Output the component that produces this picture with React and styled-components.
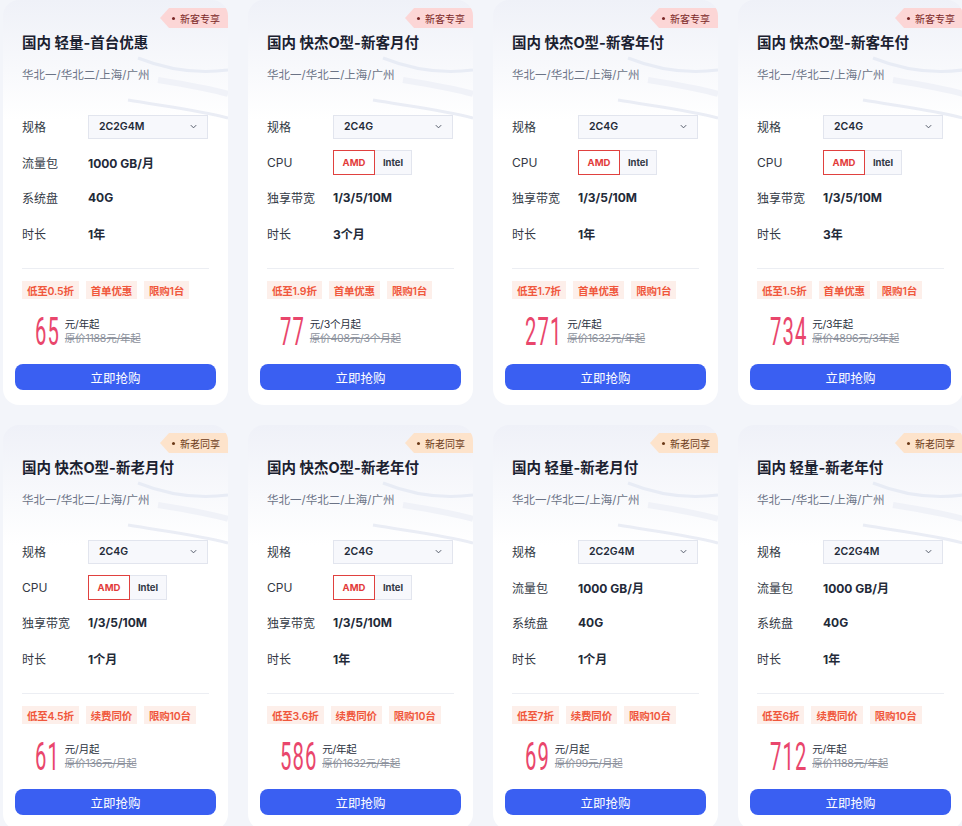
import React from "react";
import styled, { createGlobalStyle } from "styled-components";

const GlobalStyle = createGlobalStyle`
  html, body {
    margin: 0;
    padding: 0;
    background: #f3f5fa;
    overflow: hidden;
  }
  body {
    font-family: "Inter", "Noto Sans CJK SC", sans-serif;
  }
`;

const Page = styled.div`
  display: grid;
  grid-template-columns: repeat(4, 225px);
  column-gap: 20px;
  row-gap: 20px;
  padding-left: 3px;
  width: 963px;
`;

const Card = styled.div`
  position: relative;
  overflow: hidden;
  height: 405px;
  box-sizing: border-box;
  border-radius: 16px;
  background: linear-gradient(180deg, #eff1f8 0%, #f8f9fc 70px, #ffffff 120px);
  padding: 32px 19px 15px;
  display: flex;
  flex-direction: column;
`;

const Deco = styled.svg`
  position: absolute;
  right: 0;
  top: 30px;
  width: 110px;
  height: 90px;
  pointer-events: none;
`;

const Badge = styled.div`
  position: absolute;
  right: 0;
  top: 8px;
  width: 68px;
  height: 20px;
  box-sizing: border-box;
  padding-left: 12px;
  display: flex;
  align-items: center;
  gap: 5px;
  font-size: 10px;
  color: ${(p) => (p.$old ? "#6b3a17" : "#7a2626")};
  background: ${(p) => (p.$old ? "#fde3cb" : "#fcd6d6")};
  clip-path: polygon(9px 0, 100% 0, 100% 100%, 9px 100%, 0 50%);
`;

const Dot = styled.span`
  width: 3px;
  height: 3px;
  border-radius: 50%;
  background: currentColor;
`;

const Title = styled.div`
  font-size: 14.5px;
  font-weight: 700;
  line-height: 22px;
  color: #1b2130;
  position: relative;
`;

const Regions = styled.div`
  margin-top: 12px;
  font-size: 11.5px;
  line-height: 18px;
  color: #6b7386;
  position: relative;
`;

const Specs = styled.div`
  margin-top: 25px;
  display: flex;
  flex-direction: column;
  position: relative;
`;

const Row = styled.div`
  height: 35.5px;
  display: flex;
  align-items: center;
`;

const Label = styled.div`
  width: 66px;
  font-size: 12px;
  color: #333945;
`;

const Value = styled.div`
  font-size: 12px;
  font-weight: 700;
  color: #232a38;
`;

const Select = styled.div`
  width: 120px;
  height: 24px;
  box-sizing: border-box;
  border: 1px solid #e2e5ee;
  background: #f7f8fc;
  display: flex;
  align-items: center;
  justify-content: space-between;
  padding: 0 9px 0 10px;
  font-size: 10.5px;
  font-weight: 600;
  color: #232a38;
`;

const Toggles = styled.div`
  display: flex;
`;

const Toggle = styled.div`
  width: ${(p) => (p.$on ? "42px" : "37px")};
  height: 25px;
  box-sizing: border-box;
  display: flex;
  align-items: center;
  justify-content: center;
  font-size: 9.5px;
  font-weight: 700;
  color: ${(p) => (p.$on ? "#e23b3b" : "#333945")};
  background: ${(p) => (p.$on ? "#ffffff" : "#f7f8fc")};
  border: 1px solid ${(p) => (p.$on ? "#e0413f" : "#e2e5ee")};
  ${(p) => (p.$on ? "" : "border-left: none;")}
`;

const Divider = styled.div`
  margin-top: 17px;
  height: 1px;
  background: #eceef3;
`;

const Tags = styled.div`
  margin-top: 12px;
  display: flex;
  gap: 7px;
`;

const Tag = styled.span`
  flex-shrink: 0;
  white-space: nowrap;
  height: 18px;
  padding: 0 5px;
  display: flex;
  align-items: center;
  font-size: 10.5px;
  font-weight: 600;
  letter-spacing: -0.2px;
  color: #f0573c;
  background: #fdefea;
`;

const PriceBox = styled.div`
  margin-top: 17px;
  padding-left: 13px;
  height: 32px;
  display: flex;
  align-items: center;
  gap: 6px;
`;

const PriceNum = styled.div`
  height: 32px;
  position: relative;
`;

const PriceDigits = styled.span`
  display: inline-block;
  font-family: "Roboto", sans-serif;
  font-size: 39px;
  font-weight: 400;
  line-height: 32px;
  letter-spacing: 2px;
  color: #e9466c;
  transform: scaleX(0.52);
  transform-origin: left center;
  white-space: nowrap;
`;

const PriceText = styled.div`
  display: flex;
  flex-direction: column;
  font-size: 10.5px;
  line-height: 14px;
  letter-spacing: -0.2px;
`;

const Unit = styled.span`
  color: #2a3140;
`;

const Origin = styled.span`
  color: #8c919c;
  text-decoration: line-through;
`;

const BuyButton = styled.button`
  margin: 16px -7px 0 -7px;
  height: 26px;
  border: none;
  border-radius: 8px;
  background: #3a5ff2;
  color: #ffffff;
  font-family: "Noto Sans CJK SC", sans-serif;
  font-size: 12.5px;
  cursor: pointer;
`;

const Chevron = () => (
  <svg width="9" height="9" viewBox="0 0 10 10">
    <path d="M2 3.5 L5 6.5 L8 3.5" fill="none" stroke="#555c6a" strokeWidth="1.1" />
  </svg>
);

const Decoration = () => (
  <Deco viewBox="0 0 110 90">
    <path d="M20 28 C50 40 80 44 110 40" fill="none" stroke="#e8ecf5" strokeWidth="3" />
    <path d="M10 70 C45 76 80 80 110 88" fill="none" stroke="#eaedf5" strokeWidth="3" />
    <path d="M40 50 C65 54 90 58 110 64" fill="none" stroke="#f0f2f8" strokeWidth="6" />
  </Deco>
);

const light = (spec, dur) => [
  { label: "规格", select: spec },
  { label: "流量包", value: "1000 GB/月" },
  { label: "系统盘", value: "40G" },
  { label: "时长", value: dur },
];

const fast = (dur) => [
  { label: "规格", select: "2C4G" },
  { label: "CPU", cpu: true },
  { label: "独享带宽", value: "1/3/5/10M" },
  { label: "时长", value: dur },
];

const cards = [
  { title: "国内 轻量-首台优惠", rows: light("2C2G4M", "1年"), tags: ["低至0.5折", "首单优惠", "限购1台"], price: "65", unit: "元/年起", origin: "原价1188元/年起" },
  { title: "国内 快杰O型-新客月付", rows: fast("3个月"), tags: ["低至1.9折", "首单优惠", "限购1台"], price: "77", unit: "元/3个月起", origin: "原价408元/3个月起" },
  { title: "国内 快杰O型-新客年付", rows: fast("1年"), tags: ["低至1.7折", "首单优惠", "限购1台"], price: "271", unit: "元/年起", origin: "原价1632元/年起" },
  { title: "国内 快杰O型-新客年付", rows: fast("3年"), tags: ["低至1.5折", "首单优惠", "限购1台"], price: "734", unit: "元/3年起", origin: "原价4896元/3年起" },
  { old: true, title: "国内 快杰O型-新老月付", rows: fast("1个月"), tags: ["低至4.5折", "续费同价", "限购10台"], price: "61", unit: "元/月起", origin: "原价136元/月起" },
  { old: true, title: "国内 快杰O型-新老年付", rows: fast("1年"), tags: ["低至3.6折", "续费同价", "限购10台"], price: "586", unit: "元/年起", origin: "原价1632元/年起" },
  { old: true, title: "国内 轻量-新老月付", rows: light("2C2G4M", "1个月"), tags: ["低至7折", "续费同价", "限购10台"], price: "69", unit: "元/月起", origin: "原价99元/月起" },
  { old: true, title: "国内 轻量-新老年付", rows: light("2C2G4M", "1年"), tags: ["低至6折", "续费同价", "限购10台"], price: "712", unit: "元/年起", origin: "原价1188元/年起" },
];

const SpecRow = ({ row }) => (
  <Row>
    <Label>{row.label}</Label>
    {row.select && (
      <Select>
        {row.select}
        <Chevron />
      </Select>
    )}
    {row.cpu && (
      <Toggles>
        <Toggle $on>AMD</Toggle>
        <Toggle>Intel</Toggle>
      </Toggles>
    )}
    {row.value && <Value>{row.value}</Value>}
  </Row>
);

const ProductCard = ({ card }) => (
  <Card>
    <Decoration />
    <Badge $old={card.old}>
      <Dot />
      {card.old ? "新老同享" : "新客专享"}
    </Badge>
    <Title>{card.title}</Title>
    <Regions>华北一/华北二/上海/广州</Regions>
    <Specs>
      {card.rows.map((row) => (
        <SpecRow key={row.label} row={row} />
      ))}
    </Specs>
    <Divider />
    <Tags>
      {card.tags.map((t) => (
        <Tag key={t}>{t}</Tag>
      ))}
    </Tags>
    <PriceBox>
      <PriceNum style={{ width: `${card.price.length * 12.4 - 1}px` }}>
        <PriceDigits>{card.price}</PriceDigits>
      </PriceNum>
      <PriceText>
        <Unit>{card.unit}</Unit>
        <Origin>{card.origin}</Origin>
      </PriceText>
    </PriceBox>
    <BuyButton>立即抢购</BuyButton>
  </Card>
);

export default function App() {
  return (
    <>
      <GlobalStyle />
      <Page>
        {cards.map((card, i) => (
          <ProductCard key={i} card={card} />
        ))}
      </Page>
    </>
  );
}
